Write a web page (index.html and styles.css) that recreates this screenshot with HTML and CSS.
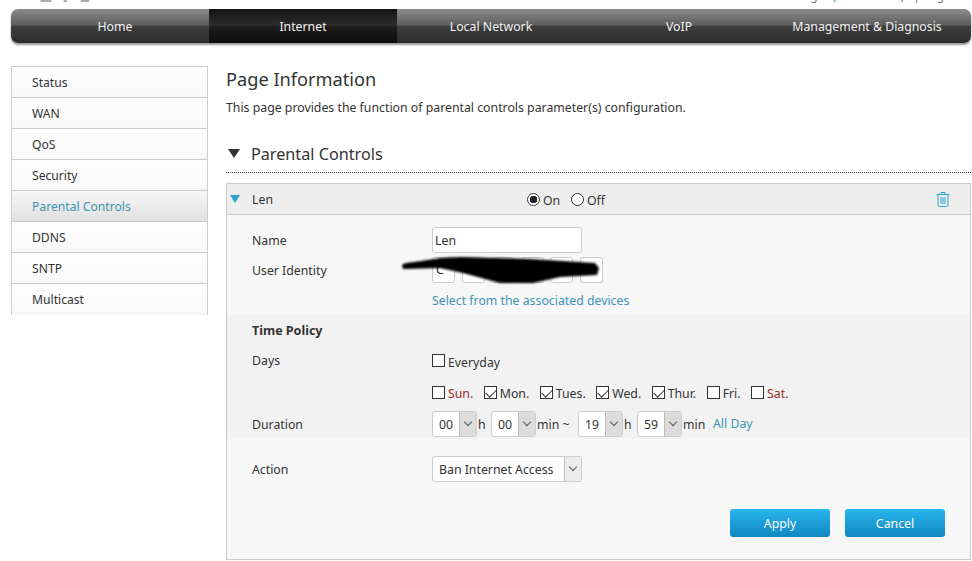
FILE: index.html
```html
<!DOCTYPE html>
<html lang="en">
<head>
<meta charset="utf-8">
<title>Parental Controls</title>
<link rel="stylesheet" href="styles.css">
</head>
<body>
<header class="top"><span class="logo">ZTE</span><span class="toplinks">Manager <span class="toplink">(192.168.1.1)</span> | Logout</span></header>
<nav class="nav">
  <a class="nav-item">Home</a>
  <a class="nav-item active">Internet</a>
  <a class="nav-item">Local Network</a>
  <a class="nav-item">VoIP</a>
  <a class="nav-item">Management &amp; Diagnosis</a>
</nav>
<div class="layout">
  <ul class="side">
    <li>Status</li><li>WAN</li><li>QoS</li><li>Security</li>
    <li class="current">Parental Controls</li>
    <li>DDNS</li><li>SNTP</li><li>Multicast</li>
  </ul>
  <main class="main">
    <h1>Page Information</h1>
    <p class="intro">This page provides the function of parental controls parameter(s) configuration.</p>
    <h2 class="section"><span class="tri-down"></span>Parental Controls</h2>
    <section class="panel">
      <div class="panel-head">
        <span class="tri-blue"></span>
        <span class="pname">Len</span>
        <span class="radios">
          <span class="radio on"></span><span class="rlabel">On</span>
          <span class="radio"></span><span class="rlabel">Off</span>
        </span>
        <svg class="trash" viewBox="0 0 14 16" width="14" height="16" fill="none" stroke="#2aa3cf" stroke-width="1">
          <path d="M0.500 3.500h13M5 3.500V1.500h4v2M2 3.500V14q0 1.500 1.500 1.500h7q1.500 0 1.500-1.500V3.500M5 6v7M7 6v7M9 6v7"/>
        </svg>
      </div>
      <div class="block">
        <div class="row name-row"><label>Name</label><div class="input">Len</div></div>
        <div class="row id-row">
          <label>User Identity</label>
          <div class="macs"><span class="mac">C</span><span class="mac"></span><span class="mac"></span><span class="mac"></span><span class="mac"></span><span class="mac"></span></div>
          <svg class="scribble" viewBox="0 0 204 32" width="204" height="32"><path d="M2 11C4 8 20 8 40 4L60 3L130 5L195 9L199 14L197 21L160 23L133 29L100 29L63 19L40 14L3 15Z" fill="#000"/></svg>
        </div>
        <div class="row link-row"><a class="link">Select from the associated devices</a></div>
      </div>
      <div class="policy">
        <div class="policy-title">Time Policy</div>
        <div class="row days-row"><label>Days</label><span class="check"></span><span class="ck-label">Everyday</span></div>
        <div class="row week-row">
          <span class="day"><span class="check"></span><span class="dlabel red">Sun.</span></span>
          <span class="day"><span class="check checked"></span><span class="dlabel">Mon.</span></span>
          <span class="day"><span class="check checked"></span><span class="dlabel">Tues.</span></span>
          <span class="day"><span class="check checked"></span><span class="dlabel">Wed.</span></span>
          <span class="day"><span class="check checked"></span><span class="dlabel">Thur.</span></span>
          <span class="day"><span class="check"></span><span class="dlabel">Fri.</span></span>
          <span class="day"><span class="check"></span><span class="dlabel red">Sat.</span></span>
        </div>
        <div class="row dur-row">
          <label>Duration</label>
          <span class="sel num"><span class="val">00</span><span class="arrow"></span></span><span class="unit u-h">h</span>
          <span class="sel num"><span class="val">00</span><span class="arrow"></span></span><span class="unit u-tilde">min ~</span>
          <span class="sel num"><span class="val">19</span><span class="arrow"></span></span><span class="unit u-h">h</span>
          <span class="sel num"><span class="val">59</span><span class="arrow"></span></span><span class="unit u-min">min</span>
          <a class="link">All Day</a>
        </div>
      </div>
      <div class="action">
        <div class="row"><label>Action</label><span class="sel big"><span class="val">Ban Internet Access</span><span class="arrow light"></span></span></div>
        <div class="buttons"><button class="btn">Apply</button><button class="btn">Cancel</button></div>
      </div>
    </section>
  </main>
</div>
</body>
</html>
```
FILE: styles.css
```css
* { box-sizing: border-box; }
html, body { margin: 0; height: 561px; overflow: hidden; }
body { background: #fff; color: #333; font: 12.300px/1.2 "Noto Sans", sans-serif; }
.top { height: 9px; overflow: hidden; display: flex; justify-content: space-between; padding: 0 9px 0 40px; }
.logo { margin-top: -15px; font-size: 20px; line-height: 20px; font-weight: 700; color: #aaa; letter-spacing: 8px; }
.toplinks { margin-top: -11px; line-height: 14px; color: #777; font-size: 12px; }
.toplink { color: #3d95b5; margin-right: 6px; }
.nav { margin: 0 1px 0 11px; height: 34px; padding: 0 10px; display: flex; border-radius: 7px; background: linear-gradient(#8c8c8c 0, #5c5c5c 48%, #3e3e3e 50%, #2b2b2b 100%); box-shadow: 0 2px 2px #9a9a9a; }
.nav-item { width: 188px; color: #f2f2f2; text-align: center; line-height: 36px; }
.active { background: linear-gradient(#141414, #2c2c2c 48%, #1c1c1c 52%, #0c0c0c); }
.layout { display: flex; padding: 23px 1px 0 11px; }
.side { list-style: none; margin: 0; padding: 0; width: 197px; height: 249px; border: 1px solid #ccc; flex: none; font-size: 12.150px; }
.side li { height: 31px; line-height: 29px; padding: 1px 0 0 20px; border-bottom: 1px solid #ccc; color: #333; background: linear-gradient(#fff, #f8f8f8); }
.side li:last-child { border-bottom: 0; }
.side .current { color: #3d95b5; background: linear-gradient(#f6f6f6, #e0e0e0); }
.main { flex: 1; margin-left: 18px; min-width: 0; }
h1 { margin: 0; font-size: 18.200px; font-weight: 400; line-height: 26px; color: #333; }
.intro { margin: 7px 0 0; line-height: 18px; }
.section { margin: 26px 0 0; height: 30px; padding: 0 0 8px 2px; font-size: 16.200px; line-height: 24px; font-weight: 400; border-bottom: 1px dotted #333; display: flex; align-items: center; color: #333; }
.tri-down { width: 0; height: 0; border: 6px solid transparent; border-top: 9px solid #333; border-bottom: 0; margin-right: 11px; }
.panel { margin-top: 10px; height: 377px; border: 1px solid #ccc; background: #f7f7f7; }
.panel-head { height: 31px; background: #eee; border-bottom: 1px solid #ccc; position: relative; display: flex; align-items: center; padding-left: 3px; }
.tri-blue { width: 0; height: 0; border: 5px solid transparent; border-top: 8px solid #2aa3cf; border-bottom: 0; margin-right: 12px; }
.pname { width: 275px; padding-top: 3px; }
.radios { display: flex; align-items: center; }
.radio { width: 13px; height: 13px; border: 1px solid #333; border-radius: 50%; background: #fff; display: block; }
.radio.on { background: radial-gradient(circle, #222 0 3.500px, #fff 4px); }
.rlabel { margin: 5px 11px 0 3px; width: 17px; }
.trash { position: absolute; right: 20px; top: 7px; }
.row { display: flex; align-items: center; position: relative; }
.row label { width: 205px; padding: 2px 0 0 25px; flex: none; }
.block { height: 100px; padding-top: 12px; }
.name-row { height: 26px; }
.input { width: 150px; height: 26px; line-height: 26px; padding-left: 2px; background: #fff; border: 1px solid #ccc; border-radius: 3px; }
.id-row { height: 26px; margin-top: 4px; }
.macs { display: flex; gap: 6.500px; }
.mac { width: 23px; height: 26px; line-height: 24px; padding-left: 3px; border: 1px solid #ccc; border-radius: 3px; background: #fff; }
.scribble { position: absolute; left: 173px; top: -3px; filter: blur(1px); }
.link-row { padding: 2px 0 0 205px; height: 34px; }
.link { color: #3d95b5; }
.policy { height: 124px; background: #f2f2f2; }
.policy-title { padding: 7px 0 0 25px; font-weight: 700; line-height: 18px; font-size: 12.500px; }
.days-row { margin-top: 7px; height: 26px; }
.check { width: 13px; height: 13px; border: 1px solid #333; background: #fff; display: inline-block; position: relative; flex: none; margin-right: 3px; }
.check.checked::after { content: ""; position: absolute; left: 1px; top: 2px; width: 9px; height: 5px; border: solid #333; border-width: 0 0 1px 1px; transform: rotate(-45deg); }
.ck-label { margin-top: 6px; }
.week-row { height: 26px; margin-top: 6px; padding-left: 205px; gap: 10.500px; }
.day { display: inline-flex; align-items: center; }
.dlabel { margin-top: 4px; }
.red { color: #9c2a2a; }
.dur-row { height: 26px; margin-top: 6px; }
.sel { display: inline-flex; height: 26px; background: #fff; border: 1px solid #ccc; border-radius: 3px; overflow: hidden; flex: none; }
.val { flex: 1; line-height: 26px; padding-left: 6px; }
.arrow { width: 17px; background: #dcdcdc; border-left: 1px solid #bbb; position: relative; flex: none; }
.arrow.light { background: #ececec; }
.arrow::after { content: ""; position: absolute; left: 5px; top: 7px; width: 5px; height: 5px; border: solid #555; border-width: 0 1px 1px 0; transform: rotate(45deg); }
.num { width: 45px; }
.big { width: 150px; }
.unit { padding: 2px 0 0 1px; }
.u-h { width: 14px; }
.u-tilde { width: 42px; }
.u-min { width: 31px; }
.action { padding-top: 17px; }
.buttons { display: flex; justify-content: flex-end; gap: 15px; padding-right: 25px; margin-top: 27px; }
.btn { width: 100px; height: 28px; padding-top: 3px; border: 0; border-radius: 3px; color: #fff; background: linear-gradient(#27b4ec, #1188c2); font: inherit; }
```
